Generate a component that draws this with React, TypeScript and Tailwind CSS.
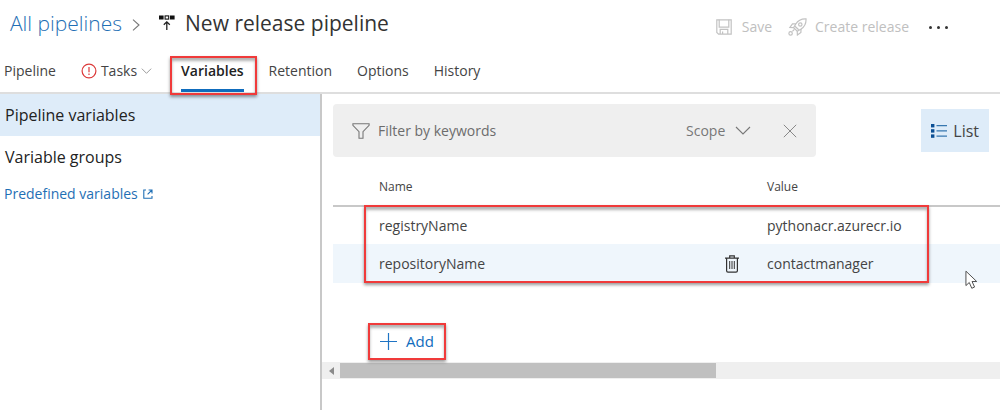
import React from "react";

const redBox =
  "pointer-events-none absolute border-2 border-[#f03a3a] shadow-[0_2px_3px_rgba(0,0,0,0.4),inset_0_3px_3px_rgba(0,0,0,0.3)]";

function ReleaseIcon() {
  return (
    <svg width="16" height="16" viewBox="0 0 16 16" fill="none" aria-hidden="true">
      <rect x="0" y="0.5" width="4.6" height="4" fill="#111" />
      <rect x="11" y="0.5" width="4.6" height="4" fill="#111" />
      <rect x="6.1" y="0.9" width="3.6" height="3.2" stroke="#111" strokeWidth="1.1" />
      <path d="M7.8 15V7M4.8 9.8l3-3 3 3" stroke="#222" strokeWidth="1.3" />
    </svg>
  );
}

function SaveIcon() {
  return (
    <svg width="16" height="16" viewBox="0 0 16 16" fill="none" stroke="#c2c2c2" strokeWidth="1.2" aria-hidden="true">
      <path d="M.8.8h14.4v14.4H2.6L.8 13.4z" />
      <path d="M3.2.8v7.4h9.6V.8" />
      <path d="M4.2 15v-4.6h7.6V15M6.6 15v-2.4" />
    </svg>
  );
}

function RocketIcon() {
  return (
    <svg width="19" height="18" viewBox="0 0 19 18" fill="none" stroke="#c2c2c2" strokeWidth="1.2" aria-hidden="true">
      <path d="M18 .8c-4.8-.2-8.2 1.8-10.2 5.2L5.6 9.7l3.7 3.6 3.8-2.2C16.6 8.9 18.3 5.4 18 .8z" />
      <path d="M7.9 5.8 4.5 5.9 1.9 9.4l3.9.2M13 11.1l-.1 3.3-3.5 2.6-.2-3.8" />
      <circle cx="12.3" cy="6.5" r="1.7" />
      <path d="M7 8.2l3.7 3.5M6.4 11.4l-2 2" />
      <circle cx="2.6" cy="15.4" r="1.7" />
    </svg>
  );
}

function Chevron({ className, stroke }: { className: string; stroke: string }) {
  return (
    <svg className={className} viewBox="0 0 16 9" fill="none" stroke={stroke} strokeWidth="1.1" aria-hidden="true">
      <path d="M1 1l7 7 7-7" />
    </svg>
  );
}

function AlertIcon() {
  return (
    <svg width="16" height="16" viewBox="0 0 16 16" fill="none" stroke="#dc3a3a" strokeWidth="1.2" aria-hidden="true">
      <circle cx="8" cy="8" r="6.9" />
      <path d="M8 4v5.2M8 10.6v1.500" />
    </svg>
  );
}

function ExternalIcon() {
  return (
    <svg width="10" height="10" viewBox="0 0 10 10" fill="none" stroke="#1f6fb5" strokeWidth="1.1" aria-hidden="true">
      <path d="M3 1H.8v8.2H9V7M5.6 1H9v3.4M9 1 4.6 5.4" />
    </svg>
  );
}

function FilterIcon() {
  return (
    <svg width="18" height="16" viewBox="0 0 18 16" fill="none" stroke="#777" strokeWidth="1.1" aria-hidden="true">
      <path d="M.9.8h16.2v1.500L11 8.600v6.600H7V8.600L.9 2.300z" />
    </svg>
  );
}

function ListIcon() {
  return (
    <svg width="16" height="14" viewBox="0 0 16 14" aria-hidden="true">
      <g fill="#0b4f94">
        <rect y="0" width="3.4" height="3.4" />
        <rect y="5.2" width="3.4" height="3.4" />
        <rect y="10.4" width="3.4" height="3.4" />
      </g>
      <path d="M5.5 1.7H16M5.5 6.900H16M5.500 12.100H16" stroke="#3777b0" strokeWidth="1.2" />
    </svg>
  );
}

function TrashIcon() {
  return (
    <svg width="14" height="18" viewBox="0 0 14 18" fill="none" stroke="#333" strokeWidth="1.2" aria-hidden="true">
      <path d="M0 3.200h14M4.700 3V.8h4.600V3M1.600 3.200v12.600q0 1.400 1.400 1.400h8q1.400 0 1.400-1.400V3.200" />
      <path d="M4.700 6v8M7 6v8M9.300 6v8" strokeWidth="1" />
    </svg>
  );
}

function Tab({ children, active = false }: { children: React.ReactNode; active?: boolean }) {
  return (
    <button
      type="button"
      role="tab"
      aria-selected={active}
      className={
        active
          ? "relative ml-1 flex h-9 items-center border-b-3 border-[#0f6cbd] pb-1 font-semibold text-[#222]"
          : "flex h-9 items-center border-b-3 border-transparent pb-1"
      }
    >
      {children}
      {active && <span className={`${redBox} top-0 -right-[13px] -bottom-[6px] -left-[11px]`} />}
    </button>
  );
}

export default function App() {
  return (
    <div className="flex min-h-screen flex-col bg-white font-['Open_Sans','Noto_Sans',sans-serif] text-sm text-[#444]">
      <header className="border-b-2 border-[#dedede]">
        <div className="flex h-14 items-start justify-between pt-[7px] pl-[10px]">
          <div className="flex h-8 items-center text-[21px]">
            <a href="#pipelines" className="font-light text-[#1f6fb5]">All pipelines</a>
            <svg className="mt-1 ml-[10px] h-3 w-2" viewBox="0 0 8 12" fill="none" stroke="#777" strokeWidth="1.1" aria-hidden="true">
              <path d="M1 .6 7 6l-6 5.400" />
            </svg>
            <span className="ml-[19px]"><ReleaseIcon /></span>
            <h1 className="ml-[10px] text-[#333]">New release pipeline</h1>
          </div>
          <div className="mr-13 flex h-10 items-center text-[#c0c0c0]">
            <button type="button" disabled className="flex items-center gap-[10px]"><SaveIcon />Save</button>
            <button type="button" disabled className="ml-4 flex items-center gap-2"><RocketIcon />Create release</button>
            <button type="button" aria-label="More actions" className="ml-5 flex gap-[5px]">
              <span className="size-[3px] rounded-full bg-[#333]" />
              <span className="size-[3px] rounded-full bg-[#333]" />
              <span className="size-[3px] rounded-full bg-[#333]" />
            </button>
          </div>
        </div>
        <nav role="tablist" className="flex gap-[25px] pl-1">
          <Tab>Pipeline</Tab>
          <Tab>
            <AlertIcon />
            <span className="ml-1">Tasks</span>
            <Chevron className="ml-1 h-[6px] w-[11px]" stroke="#777" />
          </Tab>
          <Tab active>Variables</Tab>
          <Tab>Retention</Tab>
          <Tab>Options</Tab>
          <Tab>History</Tab>
        </nav>
      </header>

      <div className="flex flex-1">
        <aside className="w-[322px] shrink-0 border-r-2 border-[#c8c8c8] text-base text-[#222]">
          <button type="button" className="flex h-[42px] w-full items-center bg-[#deecf9] pl-[5px]">Pipeline variables</button>
          <button type="button" className="flex h-[42px] w-full items-center pl-[5px]">Variable groups</button>
          <a href="#predefined" className="flex h-8 items-center gap-[5px] pl-1 text-sm text-[#1f6fb5]">
            Predefined variables <ExternalIcon />
          </a>
        </aside>

        <main className="flex min-w-0 flex-1 flex-col">
          <div className="flex items-start pt-[10px] pr-[11px] pl-[11px]">
            <div className="flex h-[53px] min-w-0 flex-1 items-center rounded bg-[#efefef] pr-[19px] pl-[19px] text-[#777]">
              <FilterIcon />
              <input
                type="text"
                aria-label="Filter by keywords"
                placeholder="Filter by keywords"
                className="ml-2 min-w-0 flex-1 bg-transparent outline-none placeholder:text-[#6c6c6c]"
              />
              <button type="button" className="flex items-center gap-[10px]">
                Scope <Chevron className="h-[9px] w-4" stroke="#777" />
              </button>
              <button type="button" aria-label="Clear filter" className="ml-8">
                <svg width="14" height="14" viewBox="0 0 14 14" stroke="#888" strokeWidth="1" aria-hidden="true">
                  <path d="M.8.8l12.400 12.400M13.200.8.8 13.200" />
                </svg>
              </button>
            </div>
            <button type="button" className="mt-[5px] ml-[105px] flex h-[43px] items-center gap-[6px] bg-[#deecf9] px-[10px] text-base">
              <ListIcon />
              <span>List</span>
            </button>
          </div>

          <div className="relative mt-[11px] pl-[11px]">
            <table className="w-full table-fixed border-collapse text-left">
              <thead>
                <tr className="h-[38px] border-b-2 border-[#c8c8c8] text-xs">
                  <th className="w-[388px] pl-[46px] font-normal">Name</th>
                  <th className="w-[46px]" aria-label="Delete" />
                  <th className="font-normal">Value</th>
                </tr>
              </thead>
              <tbody>
                <tr className="h-[38px]">
                  <td className="pl-[46px]">registryName</td>
                  <td />
                  <td>pythonacr.azurecr.io</td>
                </tr>
                <tr className="h-[39px] bg-[#eff6fc]">
                  <td className="pl-[46px]">repositoryName</td>
                  <td>
                    <button type="button" aria-label="Delete repositoryName" className="ml-1 block"><TrashIcon /></button>
                  </td>
                  <td>contactmanager</td>
                </tr>
              </tbody>
            </table>
            <div className={`${redBox} top-[37px] right-[71px] bottom-0 left-[42px]`} />
            <svg className="absolute right-[22px] -bottom-[7px] h-[20px] w-[13px]" viewBox="0 0 14 21" aria-hidden="true">
              <path d="M1 1v15.500l3.600-3.300 2.700 6.200 3-1.300-2.700-6h5z" fill="#fff" stroke="#444" strokeWidth="1" />
            </svg>
          </div>

          <div className="mt-10 ml-[46px] flex">
            <button type="button" className="relative flex h-[37px] items-center gap-[9px] px-[12px] text-[15px] text-[#0f6cbd]">
              <svg width="17" height="17" viewBox="0 0 17 17" stroke="#1f74c4" strokeWidth="1.2" aria-hidden="true">
                <path d="M8.500 0v17M0 8.500h17" />
              </svg>
              Add
              <span className={`${redBox} inset-0`} />
            </button>
          </div>

          <div className="mt-[2px] flex h-[17px] items-center bg-[#efefef]">
            <button type="button" aria-label="Scroll left" className="flex w-[18px] justify-center">
              <svg width="5" height="8" viewBox="0 0 5 8" aria-hidden="true"><path d="M5 0v8L0 4z" fill="#8a8a8a" /></svg>
            </button>
            <div className="flex-1">
              <div className="h-[15px] w-[57%] bg-[#c0c0c0]" />
            </div>
          </div>
        </main>
      </div>
    </div>
  );
}
